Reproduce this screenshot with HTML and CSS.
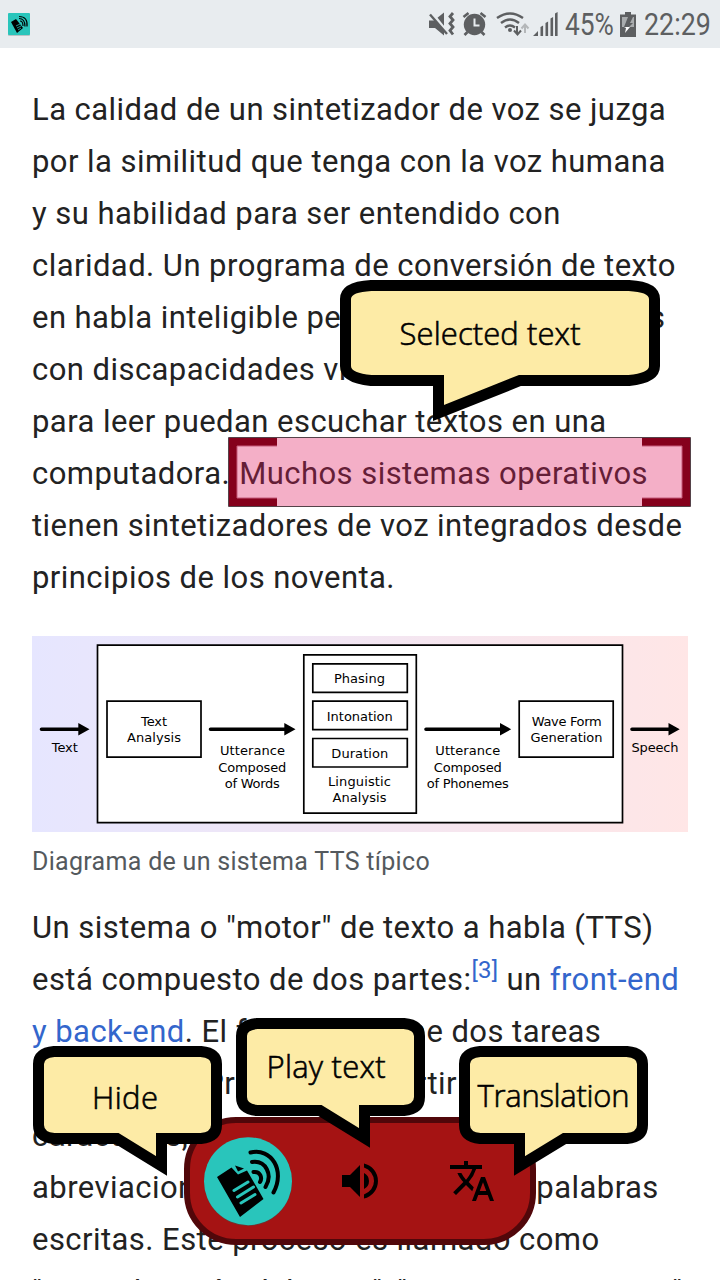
FILE: index.html
```
<!DOCTYPE html>
<html lang="es">
<head>
<meta charset="utf-8">
<title>Síntesis de habla</title>
<link rel="stylesheet" href="styles.css">
</head>
<body>
<div class="screen">
  <header class="status">
    <svg class="app" width="22" height="23" viewBox="0 0 22 23">
      <rect y="1" width="22" height="22" rx="1" fill="#b9c3c5"/><rect width="22" height="22" rx="1" fill="#29c5bb"/>
      <path d="M3 9 8 6 15 15 9 20Z" fill="#000"/>
      <path d="M8 13l4-2M9 15l4-2M10 17l3-2" stroke="#29c5bb" stroke-width=".8"/>
      <path d="M12 8q3 0 3 5M11 5.500q6 0 6 8M11 3.500q9 0 8 10" fill="none" stroke="#000" stroke-width="1.200"/>
    </svg>
    <div class="status-right">
      <svg width="132" height="32" viewBox="0 0 132 32" fill="#5d5f61">
        <path d="M1 12.500h5l10-8v23l-9-7.500H1z"/><path d="M3 4 19 24" stroke="#e8ecef" stroke-width="3"/><path d="M2 6.500 19 26" stroke="#5d5f61" stroke-width="2.400"/>
        <path d="M25 5l-3 3.500 3 3.500-3 3.500 3 3.500-3 3.500 3 4" fill="none" stroke="#5d5f61" stroke-width="2.800"/>
        <circle cx="46.500" cy="16.500" r="10.700"/><path d="M35.500 9l5-4M57.500 9l-5-4M39.500 24l-3 3M53.500 24l3 3" stroke="#5d5f61" stroke-width="2.600"/><path d="M46.500 10.500v7h5" fill="none" stroke="#e8ecef" stroke-width="2"/>
        <path d="M69 10q13-9 26 0M73 15q9-7 18 0M77 19.500q5-4 10 0" fill="none" stroke="#5d5f61" stroke-width="2.400"/><circle cx="82" cy="22" r="2"/>
        <path d="M89 18v8M86 22.500l3.500 4 3.500-4" fill="none" stroke="#5d5f61" stroke-width="2"/><path d="M97 25v-8M93.500 20.500l3.500-4 3.500 4" fill="none" stroke="#b4b7b9" stroke-width="2"/>
        <path d="M105 28l5-5v5zM112.500 19l2.600-1.500V28h-2.600zM117.500 15l2.600-1.500V28h-2.600zM122.500 10.500l2.600-1.500V28h-2.600zM127 5.500l2.600-1.500v24h-2.600z"/>
      </svg>
      <span class="status-text pct">45%</span>
      <svg class="battery" width="16" height="25" viewBox="0 0 16 25"><path d="M0 2.500h5V0h6v2.500h5V25H0z" fill="#5d5f61"/><path d="M2 5h12v10H2z" fill="#a9acae"/><path d="M8 5h5l-3 6h3l-4 4H4z" fill="#5d5f61"/><path d="M4 15h6l-5 6 1-5z" fill="#fff"/></svg>
      <span class="status-text time">22:29</span>
    </div>
  </header>

  <main class="article">
    <p class="para"><span class="line">La calidad de un sintetizador de voz se juzga</span><span class="line">por la similitud que tenga con la voz humana</span><span class="line">y su habilidad para ser entendido con</span><span class="line">claridad. Un programa de conversión de texto</span><span class="line">en habla inteligible permite que las personas</span><span class="line">con discapacidades visuales o dificultad</span><span class="line">para leer puedan escuchar textos en una</span><span class="line">computadora. <span class="picked">Muchos sistemas operativos</span></span><span class="line">tienen sintetizadores de voz integrados desde</span><span class="line">principios de los noventa.</span></p>
    <figure class="figure">
      <svg class="diagram" width="656" height="196" viewBox="32 636 656 196">
        <defs><linearGradient id="bg"><stop offset="0" stop-color="#e6e6ff"/><stop offset="1" stop-color="#ffe6e6"/></linearGradient></defs>
        <path fill="url(#bg)" d="M32 636h656v196H32z"/>
        <g fill="#fff" stroke="#000" stroke-width="1.700">
          <path d="M97.500 645.200h525v177.500h-525zM303.800 654.800h112.500v158.300H303.800zM107 701.200h94v56h-94zM519.200 701.200h94v56h-94zM312.800 663.800h94.500v28.500h-94.500zM312.800 701.200h94.500v28.500h-94.500zM312.800 738.500h94.500v28.500h-94.500z"/>
        </g>
        <path d="M41.500 729.300H79M210.500 729.300H285M426 729.300H500M632 729.300H669" stroke="#000" stroke-width="3.600" stroke-linecap="round"/>
        <path d="M78.300 723v12.600l11.200-6.300zM284.300 723v12.600l11.200-6.300zM500 723v12.600l11.200-6.300zM668.500 723v12.600l11.200-6.300z"/>
        <g class="labels">
          <text x="64.800" y="752.300" textLength="26">Text</text>
          <text x="154" y="726" textLength="26">Text</text><text x="154" y="742.300" textLength="54">Analysis</text>
          <text x="252.500" y="755" textLength="65">Utterance</text><text x="252.300" y="771.500" textLength="68">Composed</text><text x="252.300" y="788" textLength="55">of Words</text>
          <text x="359.500" y="683" textLength="51">Phasing</text><text x="359.800" y="720.500" textLength="66">Intonation</text><text x="359.800" y="758" textLength="57">Duration</text>
          <text x="359.500" y="786" textLength="63">Linguistic</text><text x="359.500" y="802" textLength="54">Analysis</text>
          <text x="467.800" y="755" textLength="65">Utterance</text><text x="467.800" y="771.500" textLength="68">Composed</text><text x="467.800" y="788" textLength="82">of Phonemes</text>
          <text x="566.700" y="726" textLength="70">Wave Form</text><text x="566.500" y="742.300" textLength="72">Generation</text>
          <text x="655" y="752.300" textLength="47">Speech</text>
        </g>
      </svg>
      <figcaption class="caption">Diagrama de un sistema TTS típico</figcaption>
    </figure>
    <p class="para second"><span class="line">Un sistema o "motor" de texto a habla (TTS)</span><span class="line">está compuesto de dos partes:<a class="ref">[3]</a> un <a class="link">front-end</a></span><span class="line"><a class="link">y back-end</a>. El front-end tiene dos tareas</span><span class="line">principales. Primero, convertir texto</span><span class="line">caracteres, números y</span><span class="line">abreviaciones a su equivalente con palabras</span><span class="line">escritas. Este proceso es llamado como</span><span class="line">"normalización del texto", "pre-procesamiento"</span></p>
  </main>

  <svg class="overlay selection" width="463" height="70" viewBox="228 437 463 70">
    <path d="M228.500 437.500h462v69h-462z" fill="#df1a5f" fill-opacity=".35" stroke="#554249"/>
    <path d="M229 438h48v8h-40v52h40v8h-48zM690 438h-48v8h40v52h-40v8h48z" fill="#85001c"/>
    <path d="M277 446h-40v52h40M642 446h40v52h-40" fill="none" stroke="#c55a7a" stroke-width="1"/>
  </svg>

  <div class="overlay dock">
    <svg width="88" height="89" viewBox="204 1136.500 88 89">
      <circle cx="248" cy="1181.500" r="44" fill="#6d3632"/><circle cx="248" cy="1180.700" r="44" fill="#29c5bb"/>
      <path d="M217 1176.500 231.500 1167l6.500 7 9-4 16.500 28.500-23.500 18z"/><path d="M235 1165l9 3-6 3z"/>
      <path d="M234 1190l14-8.500M237.500 1196.500l16-10M241 1202.500l14-8.500" stroke="#29c5bb" stroke-width="3" stroke-linecap="round"/>
      <path d="M253.500 1171.500c7-1 9 6 6.500 10M252 1161.500c14-2 21 13 13.500 25M250.500 1152c21-5 35 18 23 40" fill="none" stroke="#000" stroke-width="4" stroke-linecap="round"/>
    </svg>
    <svg class="speaker" width="48" height="48" viewBox="0 0 24 24"><path d="M3 9v6h4l5 5V4L7 9H3zm13.500 3A4.500 4.500 0 0 0 14 7.970v8.050A4.500 4.500 0 0 0 16.500 12zM14 3.230v2.060a7 7 0 0 1 0 13.420v2.060a9 9 0 0 0 0-17.540z"/></svg>
    <svg class="translate" width="48" height="48" viewBox="0 0 24 24"><path d="M12.870 15.070l-2.540-2.510.03-.03A17.520 17.520 0 0 0 14.070 6H17V4h-7V2H8v2H1v1.990h11.170C11.500 7.920 10.440 9.750 9 11.350 8.070 10.320 7.300 9.190 6.690 8h-2c.73 1.630 1.730 3.170 2.980 4.560l-5.090 5.020L4 19l5-5 3.110 3.110.76-2.040zM18.500 10h-2L12 22h2l1.120-3h4.750L21 22h2l-4.500-12zm-2.620 7l1.620-4.330L19.120 17h-3.240z"/></svg>
  </div>

  <svg class="overlay callouts" width="720" height="1280" viewBox="0 0 720 1280">
    <g fill="#fdeba6" stroke="#000" stroke-width="11">
      <path d="M371 285.500H629Q654.500 287 654.500 299V366Q654.500 378 629 380.500H520L438.500 413V380.500H371Q345.500 378 345.500 366V299Q345.500 287 371 285.500Z"/>
      <path d="M54 1051.500H201Q216.500 1053 216.500 1064V1125Q216.500 1137 201 1138.500H161.500V1166L117 1138.500H54Q38.500 1137 38.500 1125V1064Q38.500 1053 54 1051.500Z"/>
      <path d="M257 1023.500H404Q419.500 1025 419.500 1036V1097Q419.500 1109 404 1110.500H364.500V1138L320 1110.500H257Q241.500 1109 241.500 1097V1036Q241.500 1025 257 1023.500Z"/>
      <path d="M480 1051.500H627Q642.500 1053 642.500 1064V1125Q642.500 1137 627 1138.500H564.500L519.500 1166V1138.500H480Q464.500 1137 464.500 1125V1064Q464.500 1053 480 1051.500Z"/>
    </g>
    <g class="call-labels">
      <text x="399.500" y="345" textLength="181">Selected text</text>
      <text x="92" y="1109" textLength="66">Hide</text>
      <text x="266.500" y="1078" textLength="119">Play text</text>
      <text x="477.500" y="1107" textLength="152">Translation</text>
    </g>
  </svg>
</div>
</body>
</html>
```
FILE: styles.css
```
body { margin: 0; background: #fff; font-family: Roboto, sans-serif; }
.screen { position: relative; width: 720px; height: 1280px; overflow: hidden; background: #fff; }
.status { height: 48px; box-sizing: border-box; background: #e8ecef; display: flex; justify-content: space-between; align-items: flex-start; padding: 0 10px 0 8px; }
.app { margin-top: 13px; }
.status-right { display: flex; align-items: flex-start; color: #5d5f61; }
.status-right svg { margin-top: 8px; }
.status-right .battery { margin: 12px 8px 0 7px; }
.status-text { font-size: 31px; line-height: 50px; transform-origin: left; white-space: nowrap; }
.pct { width: 48px; margin-left: 5px; transform: scaleX(.85); }
.time { width: 66px; transform: scaleX(.865); }
.article { padding: 36px 32px 0; }
.para { margin: 0; font-size: 31px; line-height: 52px; letter-spacing: .45px; color: #222; }
.line { display: block; white-space: nowrap; }
.picked { margin-left: 1px; }
.figure { margin: 32px 0 0; }
.diagram { display: block; }
.labels { font-family: "DejaVu Sans", sans-serif; font-size: 13px; text-anchor: middle; }
.caption { font-size: 25px; line-height: 36px; margin-top: 12px; color: #54595d; letter-spacing: .3px; white-space: nowrap; }
.second { margin-top: 22px; }
.link, .ref { color: #3366cc; }
.ref { font-size: 24px; line-height: 1; vertical-align: 12px; letter-spacing: .2px; }
.overlay { position: absolute; }
.selection { left: 228px; top: 437px; }
.dock { left: 184px; top: 1117px; width: 352px; height: 128px; box-sizing: border-box; border: 6px solid #51070a; border-radius: 52px; background: #a51313; display: flex; align-items: center; padding-left: 14px; }
.speaker { margin-left: 44px; }
.translate { margin-left: 64px; }
.callouts { left: 0; top: 0; }
.call-labels { font-family: "Open Sans", "Noto Sans", sans-serif; font-weight: 300; font-size: 31px; fill: #000; stroke: #000; stroke-width: .6px; }
```
